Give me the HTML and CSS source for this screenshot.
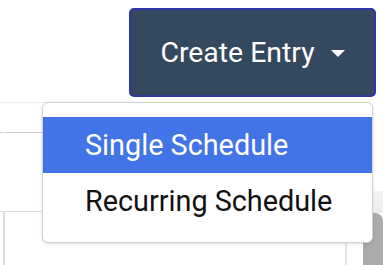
FILE: index.html
```html
<!DOCTYPE html>
<html>
<head>
<meta charset="utf-8">
<link rel="stylesheet" href="styles.css">
</head>
<body>
<div class="page">
  <div class="toolbar">
    <button class="btn" type="button">
      <span class="btn-label">Create Entry</span>
      <span class="caret"></span>
    </button>
  </div>
  <div class="content">
    <div class="table">
      <div class="thead"><span class="tick"></span></div>
      <div class="row"></div>
      <div class="grid">
        <div class="cell first"></div>
        <div class="cell last"></div>
      </div>
    </div>
    <div class="scroll">
      <div class="track"></div>
      <div class="thumb"></div>
    </div>
  </div>
  <div class="menu">
    <div class="item active">Single Schedule</div>
    <div class="item">Recurring Schedule</div>
  </div>
</div>
</body>
</html>
```

FILE: styles.css
```css
html, body {
  margin: 0;
  padding: 0;
  background: #ffffff;
}
body {
  width: 390px;
  height: 265px;
  overflow: hidden;
  font-family: Roboto, "Liberation Sans", sans-serif;
}
.page {
  position: relative;
  width: 390px;
  height: 265px;
  display: flex;
  flex-direction: column;
}
.toolbar {
  height: 102px;
  box-sizing: border-box;
  display: flex;
  justify-content: flex-end;
  align-items: flex-start;
  padding: 8px 14px 0 0;
}
.btn {
  width: 247px;
  height: 89px;
  box-sizing: border-box;
  border: 2px solid #2d35a8;
  border-radius: 5px;
  background: #34495e;
  color: #ffffff;
  font-family: Roboto, "Liberation Sans", sans-serif;
  font-size: 28.4px;
  display: flex;
  align-items: center;
  justify-content: center;
  gap: 16px;
  padding: 0;
}
.caret {
  width: 0;
  height: 0;
  border-top: 7px solid #ffffff;
  border-left: 7.5px solid transparent;
  border-right: 7.5px solid transparent;
  margin-top: 1px;
}
.content {
  flex: 1;
  display: flex;
}
.table {
  width: 363px;
  display: flex;
  flex-direction: column;
}
.thead {
  height: 31px;
  box-sizing: border-box;
  border-top: 1px solid #efefef;
  border-bottom: 1px solid #c5cdd8;
  position: relative;
}
.tick {
  position: absolute;
  left: 3px;
  bottom: -1px;
  width: 1px;
  height: 1px;
  background: #ffffff;
}
.row {
  height: 79px;
  box-sizing: border-box;
  border-bottom: 1px solid #dddddd;
}
.grid {
  flex: 1;
  display: flex;
  justify-content: space-between;
}
.cell.first {
  margin-left: 3px;
  width: 2px;
  background: #dddddd;
}
.cell.last {
  margin-right: 16px;
  width: 2px;
  background: #e4e2f2;
}
.scroll {
  width: 20px;
  display: flex;
  flex-direction: column;
  padding-top: 89px;
}
.track {
  height: 22px;
  background: linear-gradient(#f4f4f4, #ececec);
}
.thumb {
  flex: 1;
  background: #ababab;
  border-radius: 0 8px 0 0;
}
.menu {
  position: absolute;
  left: 42px;
  top: 102px;
  width: 331px;
  height: 141px;
  box-sizing: border-box;
  border: 1px solid #d2d2d2;
  border-radius: 6px;
  background: #ffffff;
  padding: 14px 0 13px;
  box-shadow: 0 1px 3px rgba(0, 0, 0, 0.12);
}
.item {
  height: 56px;
  display: flex;
  align-items: center;
  padding-left: 42px;
  font-size: 28.8px;
  color: #111111;
}
.item.active {
  background: #4274e7;
  color: #ffffff;
}
```
